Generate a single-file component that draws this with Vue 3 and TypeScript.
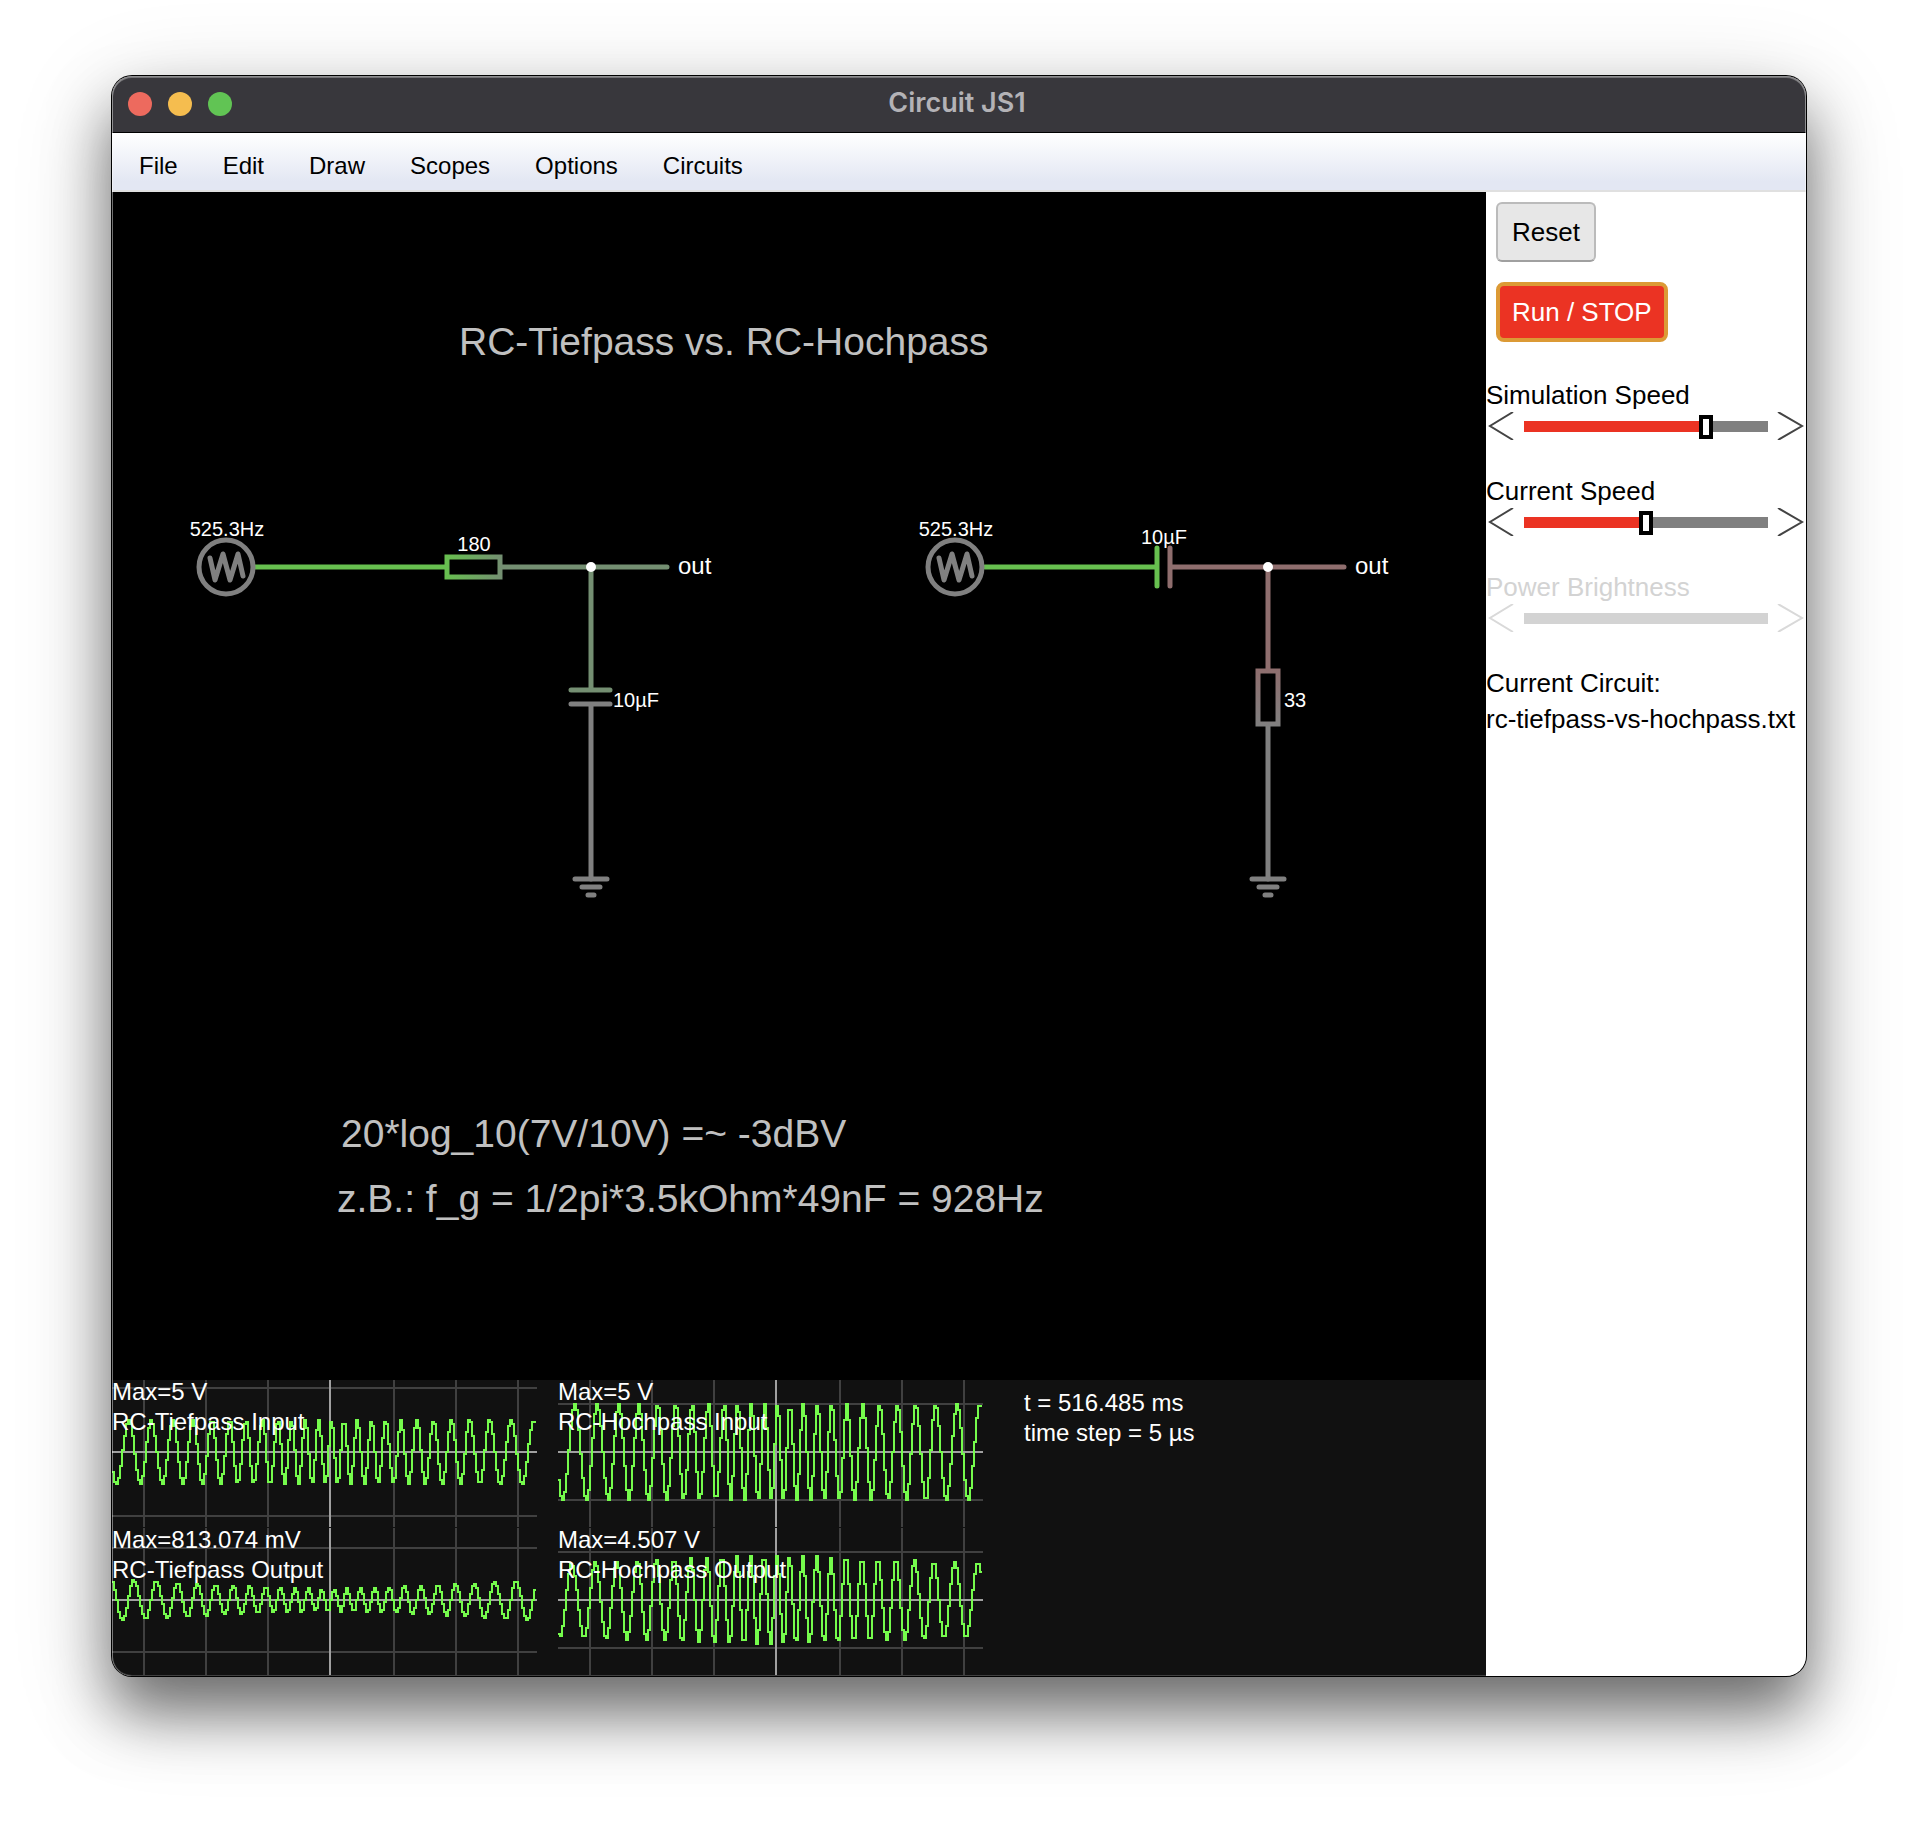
<script setup lang="ts">
import { ref } from 'vue'

interface Slider {
  id: string
  label: string
  value: number
  disabled: boolean
}

interface Scope {
  id: string
  max: string
  title: string
  grid: number[]
  peaks: number[]
  troughs: number[]
  amplitude: (x: number) => number
}

const menus = ['File', 'Edit', 'Draw', 'Scopes', 'Options', 'Circuits']

const sliders = ref<Slider[]>([
  { id: 'sim-speed', label: 'Simulation Speed', value: 76, disabled: false },
  { id: 'cur-speed', label: 'Current Speed', value: 50, disabled: false },
  { id: 'power', label: 'Power Brightness', value: 50, disabled: true },
])

const plotWidth = 425
const midY = 72
const gridX = [32, 94, 156, 282, 344, 406]
const triggerX = 218

// Extrema of the sweep, in thirds of a pixel
const inputPeaks = [48, 115, 180, 240, 297, 351, 400, 449, 496, 536, 577, 617, 656, 693, 733, 776, 818, 864, 912, 962, 1016, 1070, 1130, 1195, 1263]
const inputTroughs = [11, 83, 149, 210, 269, 323, 374, 422, 471, 515, 557, 598, 638, 674, 713, 755, 796, 842, 887, 937, 988, 1043, 1101, 1162, 1228, 1298]
const lowPeaks = [-6, 63, 130, 194, 253, 308, 361, 410, 458, 503, 547, 587, 626, 664, 701, 743, 786, 829, 874, 924, 975, 1028, 1084, 1145, 1209, 1278]
const lowTroughs = [29, 98, 164, 224, 281, 335, 386, 435, 482, 524, 566, 608, 645, 684, 722, 764, 806, 851, 899, 950, 1001, 1057, 1115, 1178, 1243]
const highPeaks = [38, 109, 174, 236, 292, 345, 396, 444, 489, 534, 576, 615, 654, 692, 732, 774, 816, 861, 909, 957, 1011, 1067, 1125, 1188, 1257]
const highTroughs = [4, 76, 142, 204, 263, 318, 369, 420, 466, 512, 555, 595, 635, 674, 711, 751, 796, 837, 885, 933, 984, 1038, 1096, 1155, 1221, 1295]

const distance = (x: number) => Math.abs(x - triggerX) / triggerX

const scopes: Scope[] = [
  { id: 'tp-in', max: 'Max=5 V', title: 'RC-Tiefpass Input', grid: [8, 136], peaks: inputPeaks, troughs: inputTroughs, amplitude: () => 32 },
  { id: 'hp-in', max: 'Max=5 V', title: 'RC-Hochpass Input', grid: [24, 120], peaks: inputPeaks, troughs: inputTroughs, amplitude: () => 48 },
  { id: 'tp-out', max: 'Max=813.074 mV', title: 'RC-Tiefpass Output', grid: [20, 124], peaks: lowPeaks, troughs: lowTroughs, amplitude: (x) => 11 + 10 * distance(x) ** 1.3 },
  { id: 'hp-out', max: 'Max=4.507 V', title: 'RC-Hochpass Output', grid: [24, 120], peaks: highPeaks, troughs: highTroughs, amplitude: (x) => 44 - 8 * distance(x) ** 1.4 },
]

function trace(scope: Scope): string {
  const nodes = [
    ...scope.peaks.map((p) => ({ x: p / 3, s: 1 })),
    ...scope.troughs.map((p) => ({ x: p / 3, s: -1 })),
  ].sort((a, b) => a.x - b.x)

  const level = (x: number): number => {
    let i = nodes.findIndex((n) => n.x > x)
    if (i < 0) i = nodes.length - 1
    if (i === 0) i = 1
    const a = nodes[i - 1]
    const b = nodes[i]
    const t = (x - a.x) / (b.x - a.x)
    const y = midY - a.s * Math.cos(Math.PI * t) * scope.amplitude(x)
    return Math.round(y / 2) * 2
  }

  let d = `M0 ${level(0)}`
  for (let x = 0; x < plotWidth - 1; x += 2) d += `V${level(x)}H${x + 2}`
  return d
}
</script>

<template>
  <div class="desktop">
    <div class="window">
      <header class="titlebar">
        <div class="lights">
          <button class="light close" aria-label="Close"></button>
          <button class="light minimize" aria-label="Minimize"></button>
          <button class="light zoom" aria-label="Zoom"></button>
        </div>
        <h1>Circuit JS1</h1>
      </header>

      <nav class="menubar">
        <button v-for="m in menus" :key="m" class="menu">{{ m }}</button>
      </nav>

      <div class="workspace">
        <main class="stage">
          <svg class="circuit" viewBox="0 0 1374 1188">
            <defs>
              <linearGradient id="res-h" gradientUnits="userSpaceOnUse" x1="333" y1="0" x2="390" y2="0">
                <stop offset="0" stop-color="#67c04f" />
                <stop offset="1" stop-color="#748f72" />
              </linearGradient>
              <linearGradient id="res-v" gradientUnits="userSpaceOnUse" x1="0" y1="477" x2="0" y2="534">
                <stop offset="0" stop-color="#8f6e6e" />
                <stop offset="1" stop-color="#808080" />
              </linearGradient>
              <g id="source">
                <circle r="27" />
                <path stroke-linejoin="round" d="M-16 -9L-11 13L-3 -13L4 13L12 -13L17 9" />
              </g>
              <g id="ground">
                <path d="M-16 0H16M-9 8H9M-3 16H3" />
              </g>
            </defs>

            <g class="note">
              <text x="347" y="163">RC-Tiefpass vs. RC-Hochpass</text>
              <text x="229" y="955">20*log_10(7V/10V) =~ -3dBV</text>
              <text x="225" y="1020">z.B.: f_g = 1/2pi*3.5kOhm*49nF = 928Hz</text>
            </g>

            <g class="wire">
              <path class="high" d="M143 375H334" />
              <path class="low" d="M390 375H555M479 375V498M459 498H498" />
              <path class="neutral" d="M459 512H498M479 512V687" />
              <rect x="335" y="365" width="53" height="20" stroke="url(#res-h)" />
              <use class="neutral" href="#source" x="114" y="375" />
              <use class="neutral" href="#ground" x="479" y="687" />

              <path class="high" d="M873 375H1045M1045 356V394" />
              <path class="negative" d="M1058 356V394M1058 375H1232M1156 375V478" />
              <path class="neutral" d="M1156 534V687" />
              <rect x="1146" y="479" width="20" height="53" stroke="url(#res-v)" />
              <use class="neutral" href="#source" x="843" y="375" />
              <use class="neutral" href="#ground" x="1156" y="687" />
            </g>
            <circle class="node" cx="479" cy="375" r="5" />
            <circle class="node" cx="1156" cy="375" r="5" />

            <g class="value">
              <text x="115" y="344" text-anchor="middle">525.3Hz</text>
              <text x="362" y="359" text-anchor="middle">180</text>
              <text x="501" y="515">10µF</text>
              <text x="844" y="344" text-anchor="middle">525.3Hz</text>
              <text x="1052" y="352" text-anchor="middle">10µF</text>
              <text x="1172" y="515">33</text>
            </g>
            <g class="pin">
              <text x="566" y="382">out</text>
              <text x="1243" y="382">out</text>
            </g>
          </svg>

          <section class="scopes">
            <div class="plots">
              <svg v-for="s in scopes" :key="s.id" class="plot" viewBox="0 0 446 148">
                <g class="grid">
                  <path v-for="y in s.grid" :key="y" :d="`M0 ${y}H${plotWidth}`" />
                  <path v-for="x in gridX" :key="x" :d="`M${x} 0V147`" />
                </g>
                <path class="axis" :d="`M0 ${midY}H${plotWidth}M${triggerX} 0V147`" />
                <path class="trace" :d="trace(s)" />
                <text x="0" y="20">{{ s.max }}</text>
                <text x="0" y="50">{{ s.title }}</text>
              </svg>
            </div>
            <div class="info">
              <p>t = 516.485 ms</p>
              <p>time step = 5 µs</p>
            </div>
          </section>
        </main>

        <aside class="sidebar">
          <button class="btn">Reset</button>
          <button class="btn run">Run / STOP</button>
          <div class="sliders">
            <div v-for="s in sliders" :key="s.id" class="slider" :class="{ off: s.disabled }">
              <label :for="s.id">{{ s.label }}</label>
              <div class="control">
                <button class="arrow" :disabled="s.disabled" :aria-label="`Decrease ${s.label}`">
                  <svg viewBox="0 0 38 28"><path d="M27 0L4 14L27 28" /></svg>
                </button>
                <input
                  :id="s.id"
                  v-model.number="s.value"
                  type="range"
                  min="0"
                  max="100"
                  :disabled="s.disabled"
                  :style="{ '--fill': s.value + '%' }"
                />
                <button class="arrow" :disabled="s.disabled" :aria-label="`Increase ${s.label}`">
                  <svg viewBox="0 0 38 28"><path d="M10 0L34 14L10 28" /></svg>
                </button>
              </div>
            </div>
          </div>
          <p class="file">Current Circuit:</p>
          <p class="file">rc-tiefpass-vs-hochpass.txt</p>
        </aside>
      </div>
    </div>
  </div>
</template>

<style>
body {
  margin: 0;
  background: #fff;
}
</style>

<style scoped>
.desktop {
  padding: 76px 112px 148px;
  overflow: hidden;
  font-family: "Liberation Sans", Arial, Helvetica, sans-serif;
}
.window {
  position: relative;
  border-radius: 20px;
  overflow: hidden;
  background: #fff;
  box-shadow: 0 0 0 1px #000, 0 36px 60px rgba(0, 0, 0, 0.5), 0 24px 100px rgba(0, 0, 0, 0.2);
}
.window::after {
  content: "";
  position: absolute;
  inset: 0;
  border-radius: 20px;
  box-shadow: inset 0 0 0 1px rgba(255, 255, 255, 0.2), inset 0 1px 0 1px rgba(255, 255, 255, 0.3);
  pointer-events: none;
}
button {
  font: inherit;
  color: inherit;
  margin: 0;
  border: 0;
  padding: 0;
  background: none;
}
p {
  margin: 0;
}
.titlebar {
  display: grid;
  grid-template-columns: 1fr auto 1fr;
  align-items: center;
  height: 56px;
  background: #38373c;
  border-bottom: 1px solid #000;
}
.lights {
  display: flex;
  gap: 16px;
  padding-left: 16px;
}
.light {
  width: 24px;
  height: 24px;
  border-radius: 50%;
}
.close { background: #ed6a5e; }
.minimize { background: #f5bd4f; }
.zoom { background: #61c454; }
h1 {
  margin: 0 4px 2px 0;
  font: 600 27px/32px Inter, sans-serif;
  color: #b3b2b6;
}
.menubar {
  display: flex;
  gap: 45px;
  height: 57px;
  padding: 0 27px;
  font-size: 24px;
  background: linear-gradient(#fff, #e3e7f3 85%);
  border-bottom: 2px solid #e0e0e0;
}
.menu {
  padding-top: 8px;
}
.workspace {
  display: flex;
}
.stage {
  flex: 1;
  min-width: 0;
  background: #111;
}
.circuit {
  display: block;
  width: 100%;
  background: #000;
}
.note {
  font-size: 39px;
  fill: #c0c0c0;
}
.value {
  font-size: 20px;
  fill: #fff;
}
.pin {
  font-size: 24px;
  fill: #fff;
}
.wire {
  fill: none;
  stroke-width: 5px;
  stroke-linecap: round;
}
.high { stroke: #67c04f; }
.low { stroke: #748f72; }
.negative { stroke: #8f6e6e; }
.neutral { stroke: #808080; }
.node { fill: #fff; }
.scopes {
  display: grid;
  grid-template-columns: 892fr 482fr;
}
.plots {
  display: grid;
  grid-template-columns: 1fr 1fr;
}
.plot {
  display: block;
  width: 100%;
  overflow: visible;
  font-size: 24px;
  fill: #fff;
}
.grid,
.axis,
.trace {
  fill: none;
  stroke-width: 2px;
  shape-rendering: crispEdges;
}
.grid { stroke: #404040; }
.axis { stroke: #a0a0a0; }
.trace { stroke: #75fb4c; }
.info {
  padding: 8px 20px;
  font-size: 24px;
  line-height: 30px;
  color: #fff;
}
.sidebar {
  display: flex;
  flex-direction: column;
  align-items: flex-start;
  width: 320px;
  font-size: 26px;
  color: #000;
}
.btn {
  height: 60px;
  margin: 10px 10px;
  padding: 0 14px;
  background: #e7e7e7;
  border: 2px solid #bbb;
  border-bottom-color: #a0a0a0;
  border-radius: 6px;
}
.run {
  padding: 0 12px;
  color: #fff;
  background: #eb3323;
  border: 4px solid #dc9a35;
  border-radius: 8px;
}
.sliders {
  align-self: stretch;
  margin-top: 28px;
}
.slider {
  height: 96px;
}
.slider:last-child {
  height: 93px;
}
.slider label {
  display: block;
  padding-bottom: 2px;
  line-height: 30px;
}
.control {
  display: flex;
  align-items: center;
  height: 28px;
}
.arrow {
  width: 38px;
  height: 28px;
}
.arrow svg {
  display: block;
  width: 38px;
  height: 28px;
  fill: none;
  stroke: #444;
  stroke-width: 2px;
}
.control input {
  appearance: none;
  flex: 1;
  min-width: 0;
  height: 28px;
  margin: 0;
  background: none;
}
.control input::-webkit-slider-runnable-track {
  display: flex;
  align-items: center;
  height: 11px;
  background: linear-gradient(90deg, #eb3323 var(--fill), #808080 var(--fill));
}
.control input::-webkit-slider-thumb {
  appearance: none;
  flex: none;
  width: 14px;
  height: 24px;
  margin: -6px 0;
  background: #fff;
  border: 4px solid #000;
  box-sizing: border-box;
}
.off {
  color: #d3d3d3;
}
.off .arrow svg {
  stroke: #d9d9d9;
}
.off input::-webkit-slider-runnable-track {
  background: #d3d3d3;
}
.off input::-webkit-slider-thumb {
  visibility: hidden;
}
.file {
  line-height: 36px;
}
</style>
